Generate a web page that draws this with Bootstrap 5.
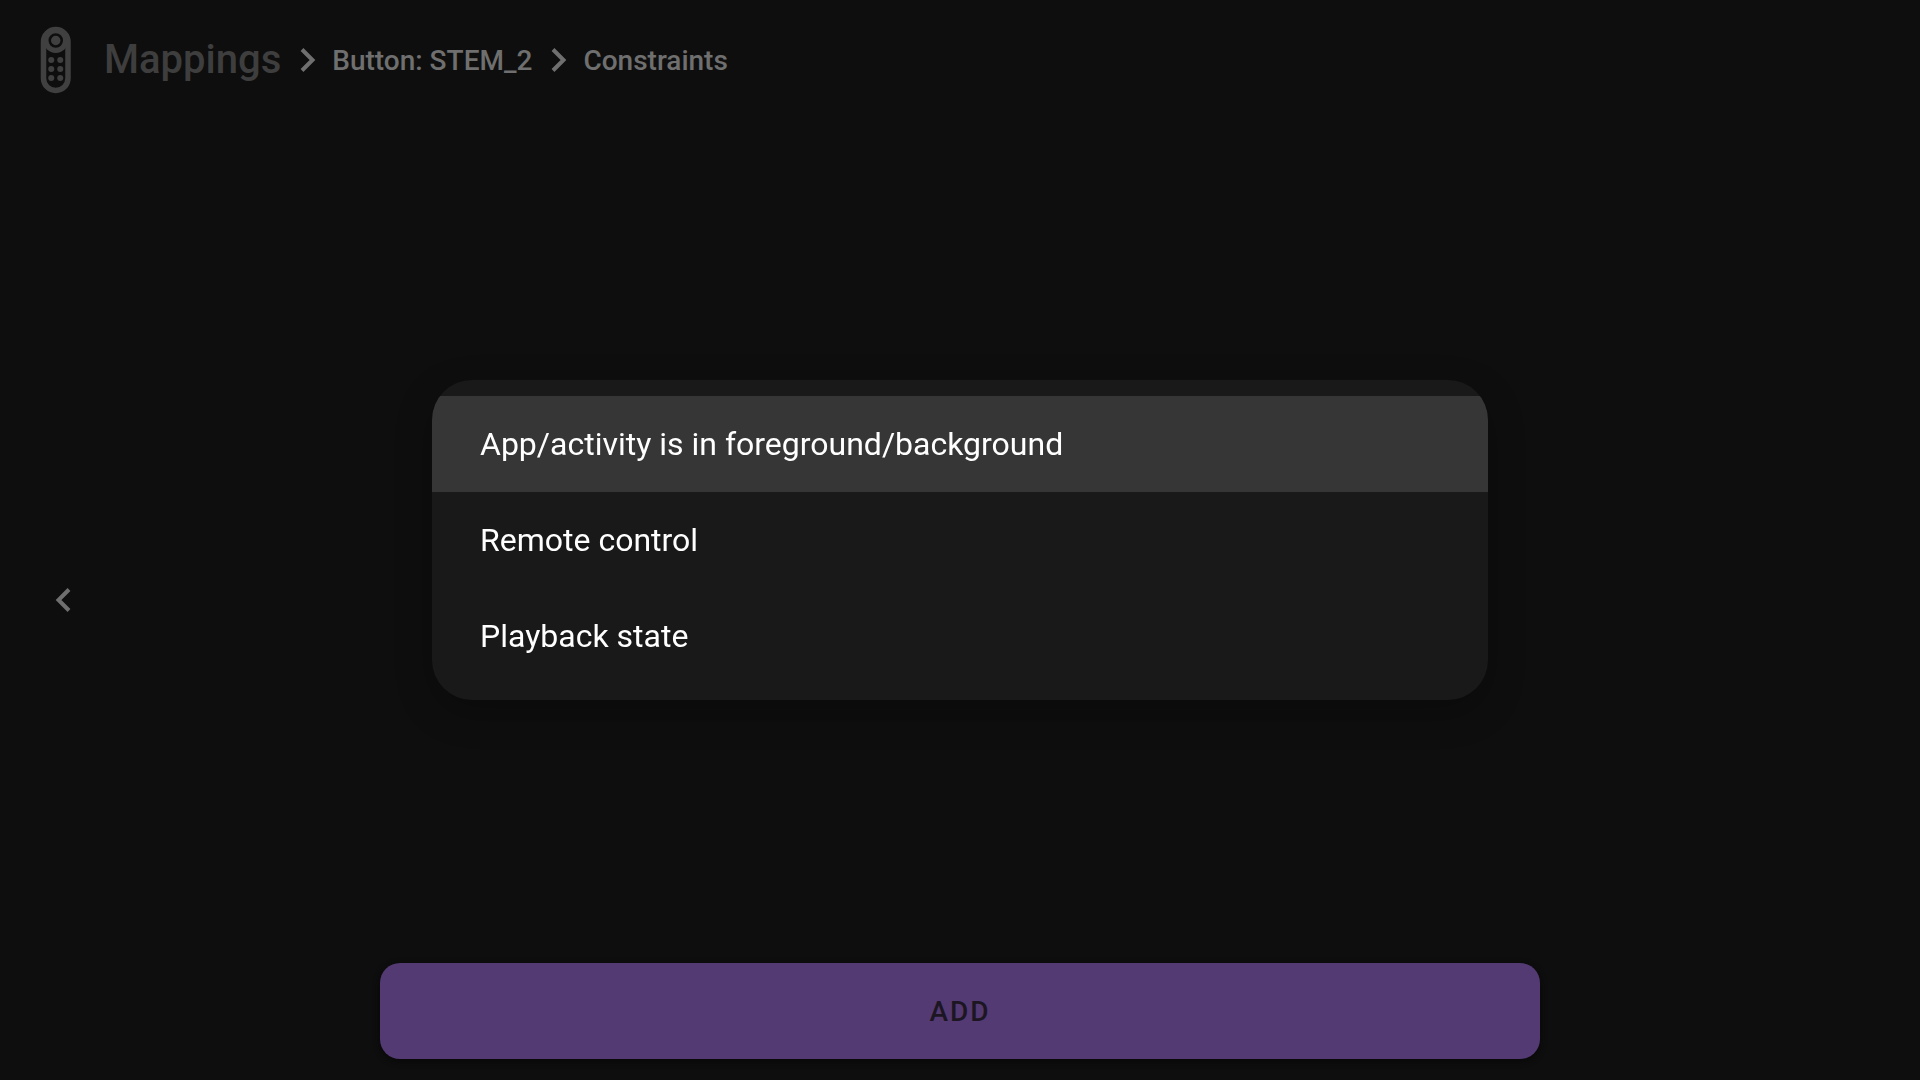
<!DOCTYPE html>
<html lang="en" data-bs-theme="dark">
<head>
<meta charset="utf-8">
<meta name="viewport" content="width=device-width, initial-scale=1">
<title>Mappings</title>
<link href="https://cdn.jsdelivr.net/npm/bootstrap@5.3.0/dist/css/bootstrap.min.css" rel="stylesheet">
<style>
body { background: #0e0e0e; font-family: Roboto, "Noto Sans", sans-serif; }
svg { display: block; fill: none; flex: none; }
.app-header { height: 120px; padding: 0 40px; }
.app-title { font-size: 40px; line-height: 48px; font-weight: 500; color: #3e3e3e; margin-left: 32px; }
.crumb { font-size: 28px; line-height: 32px; font-weight: 500; color: #6f6f6f; padding-top: 2px; }
.chevron { stroke: #6f6f6f; stroke-width: 4; }
.crumb-sep { margin: 0 15px 0 18px; }
.side { flex: 0 0 380px; padding-left: 52px; }
.add-btn { --bs-btn-color: #1c1622; --bs-btn-bg: #533a73; --bs-btn-border-color: #533a73; --bs-btn-hover-bg: #5d4280; --bs-btn-hover-color: #1c1622;
  height: 96px; padding: 2px 0 0; font-size: 28px; font-weight: 500; letter-spacing: 2px; border: 0; border-radius: 20px; margin-bottom: 21px; box-shadow: 0 2px 6px #08080a; }
.picker { max-width: 55%; }
.picker .modal-content { background: #191919; border: 0; border-radius: 40px; padding: 16px 0; overflow: hidden; box-shadow: 0 12px 36px rgba(0,0,0,.25); }
.picker .list-group { --bs-list-group-bg: transparent; --bs-list-group-action-hover-bg: #363636; --bs-list-group-active-bg: #363636; }
.picker .list-group-item { height: 96px; padding: 0 48px; border: 0; font-size: 32px; line-height: 40px; color: #fff; }
</style>
<script src="https://cdn.jsdelivr.net/npm/bootstrap@5.3.0/dist/js/bootstrap.bundle.min.js"></script>
</head>
<body>
<div class="d-flex flex-column min-vh-100">
  <header class="app-header d-flex align-items-center">
    <svg width="32" height="68" viewBox="0 0 32 68" aria-hidden="true">
      <rect x="3.5" y="3.5" width="24.5" height="61" rx="12.25" stroke="#404040" stroke-width="5.5"/>
      <circle cx="15.75" cy="14.5" r="12.5" fill="#404040"/>
      <circle cx="15.75" cy="14.5" r="6" stroke="#0e0e0e" stroke-width="2.5"/>
      <g fill="#404040"><circle cx="11.25" cy="34" r="3"/><circle cx="20.25" cy="34" r="3"/><circle cx="11.25" cy="43" r="3"/><circle cx="20.25" cy="43" r="3"/><circle cx="11.25" cy="52" r="3"/><circle cx="20.25" cy="52" r="3"/></g>
    </svg>
    <h1 class="app-title mb-0">Mappings</h1>
    <nav class="d-flex align-items-center" aria-label="Breadcrumb">
      <svg class="chevron crumb-sep" width="18" height="26" viewBox="0 0 18 26"><path d="M3 2.5 13.5 13 3 23.5"/></svg>
      <a href="#" class="crumb text-decoration-none">Button: STEM_2</a>
      <svg class="chevron crumb-sep" width="18" height="26" viewBox="0 0 18 26"><path d="M3 2.5 13.5 13 3 23.5"/></svg>
      <span class="crumb" aria-current="page">Constraints</span>
    </nav>
  </header>
  <main class="d-flex flex-grow-1">
    <div class="side d-flex align-items-center">
      <button type="button" class="btn border-0 p-0" aria-label="Back">
        <svg class="chevron" width="22" height="26" viewBox="0 0 22 26"><path d="M17 2.5 6.5 13 17 23.5"/></svg>
      </button>
    </div>
    <div class="d-flex flex-column justify-content-end flex-grow-1">
      <button type="button" class="btn add-btn w-100">ADD</button>
    </div>
    <div class="side"></div>
  </main>
</div>
<div class="modal show d-block" tabindex="-1" role="dialog" aria-label="Add constraint">
  <div class="modal-dialog modal-dialog-centered picker">
    <div class="modal-content">
      <div class="list-group list-group-flush">
        <button type="button" class="list-group-item list-group-item-action active">App/activity is in foreground/background</button>
        <button type="button" class="list-group-item list-group-item-action">Remote control</button>
        <button type="button" class="list-group-item list-group-item-action">Playback state</button>
      </div>
    </div>
  </div>
</div>
</body>
</html>
